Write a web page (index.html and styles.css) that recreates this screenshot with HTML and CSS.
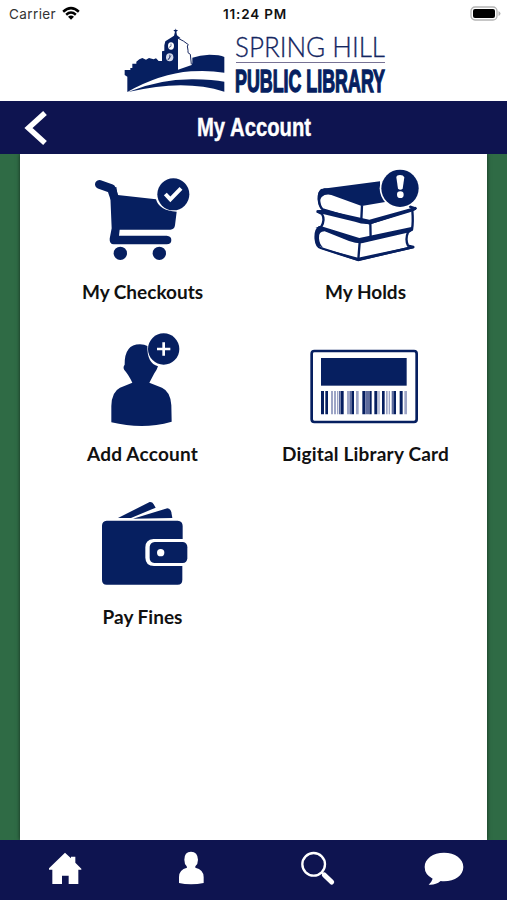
FILE: index.html
```
<!DOCTYPE html>
<html lang="en">
<head>
    <meta charset="UTF-8">
    <title>My Account - Spring Hill Public Library</title>
    <link rel="stylesheet" href="styles.css">
</head>
<body>
    <div class="status">
        <div class="carrier">
            <span>Carrier</span>
            <svg width="18" height="14" viewBox="0 0 54 42">
                <path d="M1 14Q27 -9 53 14L48 20Q27 1 6 20ZM10 23Q27 9 44 23L39 29Q27 18 15 29ZM18 32Q27 25 36 32L27 41Z"/>
            </svg>
        </div>
        <div class="time">11:24 PM</div>
        <svg class="battery" width="31" height="15" viewBox="0 0 31 15">
            <rect x="1" y="1" width="26" height="13" rx="4" fill="#fff" stroke="#b4b4b4" stroke-width="1.3"/>
            <rect x="3" y="3" width="22" height="9" rx="2"/>
            <path d="M28.5 5Q30.5 6 30.5 7.5T28.5 10Z" fill="#b4b4b4"/>
        </svg>
    </div>

    <header class="logo">
        <svg class="crest" width="110" height="74" viewBox="0 0 330 222">
            <path d="M22 204V158L14 153V138H31V132H37V119H49V113L58 106L67 102L78 107L87 102L101 106L108 103L116 111H126V82L133 80V64L136 52L148 44L162 35L165 23L160 19L166 17V13L168 17L174 19L169 23L171 34L182 43L174 44V137L215 123L217 117V101Q239 93 268 92Q300 92 313 99V146Q266 138 213 142Q120 149 22 204Z"/>
            <path d="M24 204Q120 165 220 166Q280 167 313 173V203Q220 174 108 189Q64 195 24 204Z"/>
            <path d="M174 43L190 51L205 62L202 66L204 79V86L211 91L214 121" fill="none" stroke="#16265f" stroke-width="3"/>
            <ellipse cx="153" cy="66" rx="9" ry="11" fill="#fff"/>
            <path d="M153 59V67L147 70" fill="none" stroke="#16265f" stroke-width="2"/>
            <ellipse cx="149" cy="100" rx="11" ry="12" fill="#d5daeb"/>
            <path d="M149 92V102L143 106M153 94L145 108" fill="none" stroke="#16265f" stroke-width="2"/>
        </svg>
        <svg class="wordmark" width="160" height="77" viewBox="0 0 160 77">
            <text class="spring" x="5" y="33" textLength="150" lengthAdjust="spacingAndGlyphs">SPRING HILL</text>
            <rect x="6" y="38" width="149" height="1" fill="#777294"/>
            <text class="public" x="5" y="68" textLength="150" lengthAdjust="spacingAndGlyphs">PUBLIC LIBRARY</text>
        </svg>
    </header>

    <div class="titlebar">
        <svg class="back" width="24" height="36" viewBox="0 0 24 36">
            <path d="M21 3L4.500 18L21 33" fill="none" stroke="#fff" stroke-width="5.500"/>
        </svg>
        <h1><svg width="118" height="36" viewBox="0 0 118 36">
            <text x="2" y="25.500" textLength="114" lengthAdjust="spacingAndGlyphs">My Account</text>
        </svg></h1>
    </div>

    <main>
        <div class="menu">
            <a class="item">
                <svg viewBox="15 -3 372 318">
                    <path d="M70 58L106 71L115 97" fill="none" stroke="#061f60" stroke-width="26" stroke-linecap="round" stroke-linejoin="round"/>
                    <path d="M102 70L121 66L125 90L240 103Q249 137 302 140L297 181Q295 194 283 194H131L129 212H272Q286 213 286 225Q286 238 272 238H113Q100 237 101 221L107 190Z"/>
                    <circle cx="133" cy="265" r="20"/>
                    <circle cx="250" cy="265" r="20"/>
                    <circle cx="292" cy="88" r="48"/>
                    <path d="M268 87L283 103L315 70" fill="none" stroke="#fff" stroke-width="12"/>
                </svg>
                <span class="checkouts">My Checkouts</span>
            </a>
            <a class="item">
                <svg viewBox="12 12 372 318">
                    <g fill="#fff" stroke="#061f60" stroke-width="7" stroke-linejoin="round">
                        <path d="M58 202Q45 209 47 237Q49 260 62 264L174 300L340 261L324 257Q315 238 324 217L336 207Z"/>
                        <path d="M53 155L66 162Q76 179 64 200L58 202L177 246L336 208Q340 187 337 151L347 145Z"/>
                        <path d="M74 88Q55 91 57 118Q58 140 68 148L208 190L346 145L330 140V110Z"/>
                    </g>
                    <path d="M63 87L240 64Q238 102 260 125L185 138L94 105Q76 101 65 111Q55 124 60 143Q51 126 53 108Q55 93 63 87Z"/>
                    <path d="M50 151L74 149L208 179L348 140V149L332 156L216 191Q190 195 165 185L66 161L50 158Z"/>
                    <path d="M46 203L64 199L178 234L338 200V212L322 218L185 250Q165 250 147 243L74 214Q55 214 57 235Q58 253 70 263L56 257Q43 246 45 226Q46 211 58 205Z"/>
                    <path d="M60 263L174 293L340 258L341 265L174 303L65 267Z"/>
                    <path d="M186 136L184 178M211 190L212 237M179 247L175 298" fill="none" stroke="#061f60" stroke-width="7"/>
                    <circle cx="300" cy="85" r="61" fill="#fff"/>
                    <circle cx="300" cy="85" r="56"/>
                    <path d="M289 52Q290 45 300 45T313 52L308 86Q301 92 294 86Z" fill="#fff"/>
                    <circle cx="301" cy="104" r="10" fill="#fff"/>
                </svg>
                <span class="holds">My Holds</span>
            </a>
            <a class="item">
                <svg viewBox="15 3 372 318">
                    <path d="M169 173Q157 148 145 135Q140 126 146 119Q145 58 192 58Q206 58 214 63Q213 115 246 124Q243 134 235 145L220 173L258 188Q284 200 286 241L287 290Q240 303 197 303Q151 303 106 292V243Q107 200 132 188Z"/>
                    <circle cx="263" cy="72" r="47"/>
                    <path d="M243 72H283M263 52V92" stroke="#fff" stroke-width="8"/>
                </svg>
                <span class="add">Add Account</span>
            </a>
            <a class="item">
                <svg viewBox="87 -42 372 318">
                    <rect x="110" y="33" width="315" height="213" rx="8" fill="#fff" stroke="#061f60" stroke-width="8"/>
                    <rect x="138" y="54" width="257" height="83"/>
                    <path d="M138 153h9v70h-9zM151 153h8v70h-8zM197 153h9v70h-9zM229 153h8v70h-8zM262 153h9v70h-9zM283 153h7v70h-7zM298 153h9v70h-9zM321 153h8v70h-8zM355 153h8v70h-8zM374 153h9v70h-9z"/>
                    <path d="M168 153h6v70h-6zM177 153h6v70h-6zM186 153h4v70h-4zM216 153h9v70h-9zM243 153h8v70h-8zM310 153h4v70h-4zM333 153h5v70h-5zM341 153h4v70h-4zM388 153h8v70h-8z" fill="#9da5c6"/>
                    <path d="M192 153h5v70h-5zM225 153h4v70h-4zM271 153h12v70h-12zM350 153h5v70h-5z" fill="#5d6b9d"/>
                </svg>
                <span class="card">Digital Library Card</span>
            </a>
            <a class="item">
                <svg viewBox="-27 -3 372 318">
                    <path d="M84 84L179 36Q187 35 191 43L197 53L123 84Z"/>
                    <path d="M129 86L232 55Q242 57 244 67L247 84Z"/>
                    <path d="M50 92H263Q278 93 278 108V147H190Q166 149 166 172V203Q167 228 192 228H277V269Q277 284 263 284H50Q36 284 36 269V107Q36 93 50 92Z"/>
                    <path d="M194 156H279Q292 158 292 172V205Q291 219 278 219H193Q179 217 179 203V171Q180 158 194 156Z"/>
                    <circle cx="212" cy="188" r="11" fill="#fff"/>
                </svg>
                <span>Pay Fines</span>
            </a>
        </div>
    </main>

    <nav class="tabs">
        <a><svg width="40" height="40" viewBox="0 0 120 120">
            <path d="M60 11L78 28V23H91V41L109 59V62H100V105H71V80H51V105H22V62H12V58Z"/>
        </svg></a>
        <a><svg width="40" height="40" viewBox="0 0 120 120">
            <path d="M47 52Q40 45 40 32Q40 8 60 8T81 32Q81 45 73 52V56Q98 62 98 84V102Q80 106 60 106T24 102V84Q24 62 48 56Z"/>
        </svg></a>
        <a><svg width="40" height="40" viewBox="0 0 120 120">
            <circle cx="47" cy="46" r="34" fill="none" stroke="#fff" stroke-width="7"/>
            <path d="M79 78L101 99" stroke="#fff" stroke-width="15" stroke-linecap="round"/>
            <path d="M70 69L79 78" stroke="#fff" stroke-width="6"/>
        </svg></a>
        <a><svg width="40" height="40" viewBox="0 0 120 120">
            <path d="M60 11C93 11 118 29 118 54S93 97 60 97Q55 97 50 96Q34 109 14 107Q23 99 26 89Q2 77 2 54C2 29 27 11 60 11Z"/>
        </svg></a>
    </nav>
</body>
</html>
```

FILE: styles.css
```
* {
    box-sizing: border-box;
}
body {
    margin: 0;
    height: 900px;
    display: flex;
    flex-direction: column;
    background: white;
    color: #111;
    font-family: Lato, sans-serif;
    overflow: hidden;
}
svg {
    display: block;
    overflow: visible;
}
.status {
    height: 24px;
    padding: 4px 6px 0 9px;
    display: grid;
    grid-template-columns: 1fr auto 1fr;
    font-family: Inter, sans-serif;
    font-size: 13.5px;
    line-height: 20px;
}
.carrier {
    display: flex;
    gap: 6px;
    color: #333;
    letter-spacing: 0.4px;
}
.carrier svg {
    margin-top: 2px;
}
.time {
    font-weight: 600;
    font-size: 13.5px;
    letter-spacing: 0.8px;
}
.battery {
    justify-self: end;
    margin-top: 2px;
}
.logo {
    height: 77px;
    padding-left: 120px;
    display: flex;
}
.crest {
    fill: #061f60;
}
.wordmark {
    fill: #061f60;
}
.spring {
    font-family: Lato, sans-serif;
    font-size: 27.5px;
    font-weight: 300;
    fill: #14265f;
    stroke: #14265f;
    stroke-width: 0.3px;
}
.public {
    font-family: "Liberation Sans", sans-serif;
    font-size: 31px;
    font-weight: bold;
    stroke: #061f60;
    stroke-width: 1.4px;
}
.titlebar {
    height: 53px;
    padding: 0 24px;
    background: #0e1450;
    display: grid;
    grid-template-columns: 1fr auto 1fr;
    align-items: center;
}
.titlebar h1 {
    margin: 0;
}
.titlebar text {
    fill: white;
    stroke: white;
    stroke-width: 0.4px;
    font-family: "Liberation Sans", sans-serif;
    font-size: 25px;
    font-weight: bold;
}
main {
    height: 686px;
    padding: 0 20px;
    background: #2f6b45;
}
.menu {
    height: 100%;
    padding: 10px 10px 0 11px;
    background: white;
    box-shadow: 0 0 4px rgba(0,0,0,0.6);
    display: grid;
    grid-template-columns: 223px 223px;
    grid-auto-rows: 162px;
    align-content: start;
    clip-path: inset(0 -6px);
}
.item {
    display: flex;
    flex-direction: column;
    align-items: center;
}
.item svg {
    width: 124px;
    height: 106px;
    fill: #061f60;
}
.item:last-child {
    padding-top: 1px;
}
.item span {
    margin-top: 10px;
    font-size: 19px;
    font-weight: bold;
    line-height: 24px;
    white-space: nowrap;
}
.item .add,
.item .card {
    letter-spacing: 0.2px;
}
.tabs {
    height: 60px;
    padding: 9px 0 0 2px;
    background: #0e1450;
    display: grid;
    grid-template-columns: repeat(4, 1fr);
}
.tabs a {
    display: flex;
    justify-content: center;
}
.tabs svg {
    fill: white;
}
```
